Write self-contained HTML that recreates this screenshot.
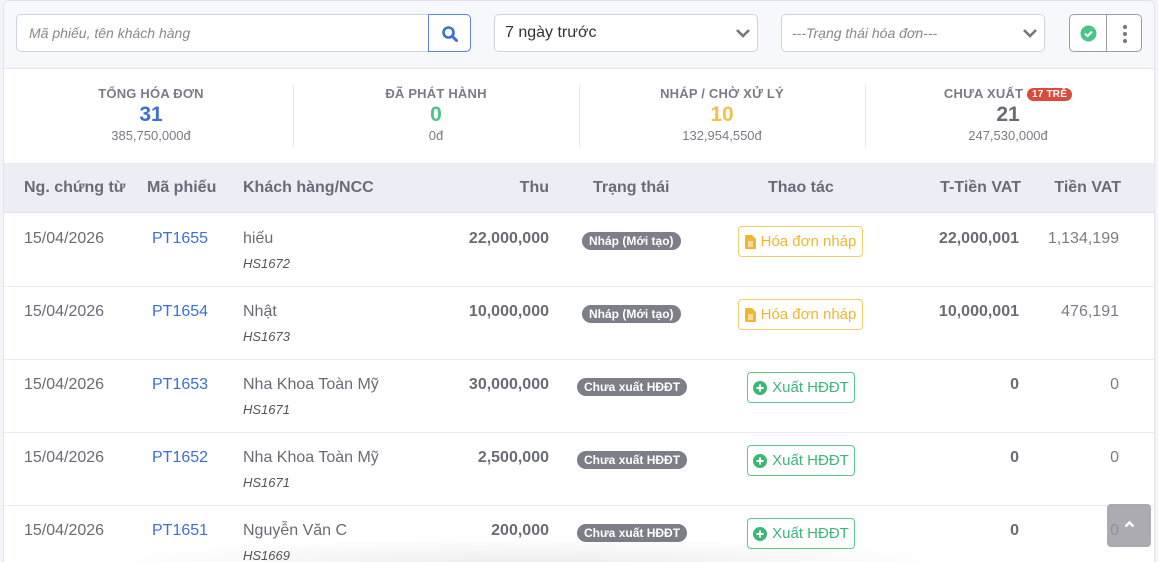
<!DOCTYPE html>
<html><head><meta charset="utf-8"><style>
*{box-sizing:border-box;margin:0;padding:0}
html,body{width:1158px;height:562px;overflow:hidden}
body{background:#f3f4f8;font-family:"Liberation Sans",sans-serif;color:#6b6b78;position:relative}
.card{position:absolute;left:3px;top:0;width:1152px;height:570px;background:#fff;border:1px solid #e3e5ee;border-radius:6px;overflow:hidden}
.top{position:absolute;left:0;top:0;width:100%;height:68px;background:#f7f8fc;border-bottom:1px solid #e6e8f0}
.ab{position:absolute}
.inp{border:1px solid #cfd3de;border-radius:5px;background:#fff;height:38px;top:13px}
.stat{position:absolute;top:85px;width:286px;text-align:center}
.stat .l{font-size:13px;font-weight:bold;color:#7b7b88;letter-spacing:.2px}
.stat .n{font-size:21px;font-weight:bold;margin-top:1px;line-height:26px}
.stat .m{font-size:13px;color:#7b7b88;margin-top:0px}
.div{position:absolute;top:84px;width:1px;height:62px;background:#e5e6ec}
.hd{position:absolute;left:0;top:162px;width:100%;height:50px;background:#ecedf5;border-bottom:1px solid #e0e2ea}
.hd span{position:absolute;top:16px;font-size:16px;font-weight:bold;color:#6b6b78}
.row{position:absolute;left:0;width:100%;height:73px;border-bottom:1px solid #ebecf2}
.row span{position:absolute;font-size:16px}
.d{left:20px;top:16px;color:#6b6b78}
.c{left:148px;top:16px;color:#3d6ede}
.k{left:239px;top:16px;color:#6b6b78}
.h{left:239px;top:42px;font-size:13px!important;font-style:italic;color:#555}
.t{right:605px;top:16px;font-weight:bold;color:#6b6b78}
.tt{right:135px;top:16px;font-weight:bold;color:#6b6b78}
.v{right:35px;top:16px;color:#7b7b88}
.badge{position:absolute;top:18px;height:18px;line-height:18px;border-radius:9px;background:#7d7e88;color:#fff;font-size:12px!important;font-weight:bold;padding:0 7px;white-space:nowrap}
.btn{position:absolute;top:12px;height:31px;border-radius:4px;font-size:15px!important;display:flex;align-items:center;justify-content:center;gap:5px;background:#fff}
.bn{left:734px;width:125px;border:1px solid #f3cd6a;color:#efb730}
.bx{left:743px;width:108px;border:1px solid #5bc98e;color:#3bb876}
</style></head><body>
<div class="card">
<div class="top">
 <div class="ab inp" style="left:12px;width:455px;"><span class="ab" style="left:12px;top:10px;font-size:14px;font-style:italic;color:#888">Mã phiếu, tên khách hàng</span></div>
 <div class="ab" style="left:424px;top:13px;width:43px;height:38px;border:1px solid #5b82e0;border-radius:0 5px 5px 0;background:#fff">
  <svg class="ab" style="left:12px;top:10px" width="18" height="18" viewBox="0 0 18 18"><circle cx="7.5" cy="7.5" r="5" fill="none" stroke="#3d6ede" stroke-width="2.6"/><path d="M11 11l4.5 4.5" stroke="#3d6ede" stroke-width="3" stroke-linecap="round"/></svg></div>
 <div class="ab inp" style="left:490px;width:264px;"><span class="ab" style="left:10px;top:9px;font-size:16px;color:#333">7 ngày trước</span>
  <svg class="ab" style="right:6px;top:12px" width="16" height="12" viewBox="0 0 16 12"><path d="M2 3l6 6 6-6" fill="none" stroke="#777" stroke-width="2.6"/></svg></div>
 <div class="ab inp" style="left:777px;width:264px;"><span class="ab" style="left:10px;top:10px;font-size:14px;font-style:italic;color:#888">---Trạng thái hóa đơn---</span>
  <svg class="ab" style="right:6px;top:12px" width="16" height="12" viewBox="0 0 16 12"><path d="M2 3l6 6 6-6" fill="none" stroke="#777" stroke-width="2.6"/></svg></div>
 <div class="ab" style="left:1065px;top:13px;width:73px;height:38px;border:1px solid #9b9ca6;border-radius:5px;background:#fff">
  <div class="ab" style="left:36px;top:0;width:1px;height:36px;background:#9b9ca6"></div>
  <svg class="ab" style="left:10px;top:10px" width="17" height="17" viewBox="0 0 17 17"><circle cx="8.5" cy="8.5" r="8" fill="#4cc38a"/><path d="M5 8.7l2.5 2.4 4.5-4.5" fill="none" stroke="#fff" stroke-width="2"/></svg>
  <svg class="ab" style="left:52px;top:9px" width="6" height="20" viewBox="0 0 6 20"><circle cx="3" cy="3" r="2" fill="#777"/><circle cx="3" cy="10" r="2" fill="#777"/><circle cx="3" cy="17" r="2" fill="#777"/></svg>
 </div>
</div>
<div class="stat" style="left:4px"><div class="l">TỔNG HÓA ĐƠN</div><div class="n" style="color:#3d6ede">31</div><div class="m">385,750,000đ</div></div>
<div class="div" style="left:289px"></div>
<div class="stat" style="left:289px"><div class="l">ĐÃ PHÁT HÀNH</div><div class="n" style="color:#4cc38a">0</div><div class="m">0đ</div></div>
<div class="div" style="left:575px"></div>
<div class="stat" style="left:575px"><div class="l">NHÁP / CHỜ XỬ LÝ</div><div class="n" style="color:#f2c14e">10</div><div class="m">132,954,550đ</div></div>
<div class="div" style="left:861px"></div>
<div class="stat" style="left:861px"><div class="l">CHƯA XUẤT <span style="display:inline-block;background:#dc4a3c;color:#fff;font-size:10px;border-radius:8px;padding:1px 5px;vertical-align:1px">17 TRỄ</span></div><div class="n" style="color:#6b6b78">21</div><div class="m">247,530,000đ</div></div>
<div class="hd">
 <span style="left:20px">Ng. chứng từ</span><span style="left:143px">Mã phiếu</span><span style="left:239px">Khách hàng/NCC</span>
 <span style="right:605px">Thu</span><span style="left:589px">Trạng thái</span><span style="left:764px">Thao tác</span>
 <span style="right:133px">T-Tiền VAT</span><span style="right:33px">Tiền VAT</span>
</div>
<div class="row" style="top:213px"><span class="d">15/04/2026</span><span class="c">PT1655</span><span class="k">hiếu</span><span class="h">HS1672</span><span class="t">22,000,000</span><span class="badge" style="left:578px">Nháp (Mới tạo)</span><span class="btn bn"><svg width="11" height="14" viewBox="0 0 11 14"><path d="M0 1a1 1 0 011-1h6l4 4v9a1 1 0 01-1 1H1a1 1 0 01-1-1z" fill="#efb730"/><path d="M3 7h5M3 9h5M3 11h5" stroke="#fff" stroke-width="1"/></svg>Hóa đơn nháp</span><span class="tt">22,000,001</span><span class="v">1,134,199</span></div>
<div class="row" style="top:286px"><span class="d">15/04/2026</span><span class="c">PT1654</span><span class="k">Nhật</span><span class="h">HS1673</span><span class="t">10,000,000</span><span class="badge" style="left:578px">Nháp (Mới tạo)</span><span class="btn bn"><svg width="11" height="14" viewBox="0 0 11 14"><path d="M0 1a1 1 0 011-1h6l4 4v9a1 1 0 01-1 1H1a1 1 0 01-1-1z" fill="#efb730"/><path d="M3 7h5M3 9h5M3 11h5" stroke="#fff" stroke-width="1"/></svg>Hóa đơn nháp</span><span class="tt">10,000,001</span><span class="v">476,191</span></div>
<div class="row" style="top:359px"><span class="d">15/04/2026</span><span class="c">PT1653</span><span class="k">Nha Khoa Toàn Mỹ</span><span class="h">HS1671</span><span class="t">30,000,000</span><span class="badge" style="left:573px">Chưa xuất HĐĐT</span><span class="btn bx"><svg width="14" height="14" viewBox="0 0 14 14"><circle cx="7" cy="7" r="7" fill="#3bb876"/><path d="M7 3.5v7M3.5 7h7" stroke="#fff" stroke-width="2"/></svg>Xuất HĐĐT</span><span class="tt">0</span><span class="v">0</span></div>
<div class="row" style="top:432px"><span class="d">15/04/2026</span><span class="c">PT1652</span><span class="k">Nha Khoa Toàn Mỹ</span><span class="h">HS1671</span><span class="t">2,500,000</span><span class="badge" style="left:573px">Chưa xuất HĐĐT</span><span class="btn bx"><svg width="14" height="14" viewBox="0 0 14 14"><circle cx="7" cy="7" r="7" fill="#3bb876"/><path d="M7 3.5v7M3.5 7h7" stroke="#fff" stroke-width="2"/></svg>Xuất HĐĐT</span><span class="tt">0</span><span class="v">0</span></div>
<div class="row" style="top:505px"><span class="d">15/04/2026</span><span class="c">PT1651</span><span class="k">Nguyễn Văn C</span><span class="h">HS1669</span><span class="t">200,000</span><span class="badge" style="left:573px">Chưa xuất HĐĐT</span><span class="btn bx"><svg width="14" height="14" viewBox="0 0 14 14"><circle cx="7" cy="7" r="7" fill="#3bb876"/><path d="M7 3.5v7M3.5 7h7" stroke="#fff" stroke-width="2"/></svg>Xuất HĐĐT</span><span class="tt">0</span><span class="v">0</span></div>
</div>
<div class="ab" style="left:100px;top:538px;width:860px;height:24px;background:radial-gradient(ellipse at 50% 100%,rgba(0,0,0,.07),rgba(0,0,0,0) 70%)"></div>
<div class="ab" style="left:1107px;top:504px;width:44px;height:43px;background:rgba(150,150,158,.8);border-radius:4px">
 <svg class="ab" style="left:17px;top:16px" width="11" height="8" viewBox="0 0 11 8"><path d="M1.5 6.5l4-4 4 4" fill="none" stroke="#fff" stroke-width="2.4"/></svg></div>
</body></html>
